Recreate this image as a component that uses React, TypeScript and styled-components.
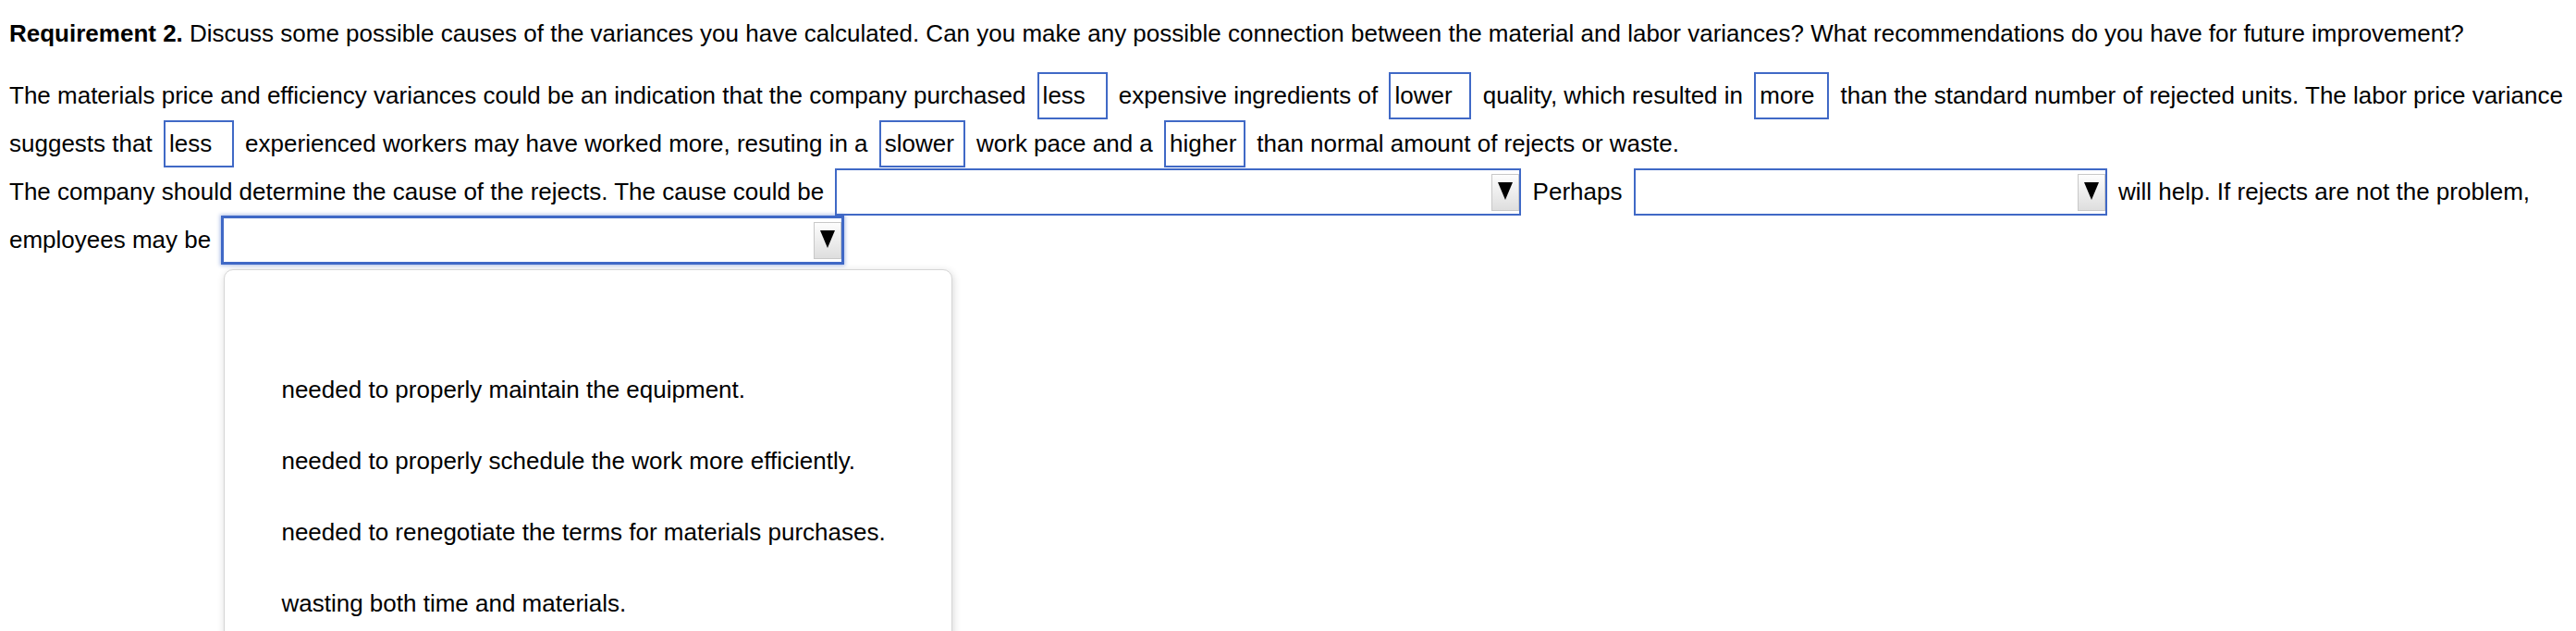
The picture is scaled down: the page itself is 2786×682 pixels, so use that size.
import React from "react";
import styled, { createGlobalStyle } from "styled-components";

const GlobalStyle = createGlobalStyle`
  html {
    overflow: hidden;
  }
  html, body {
    margin: 0;
    padding: 0;
    background: #ffffff;
  }
  body {
    font-family: "Liberation Sans", Arial, sans-serif;
    font-size: 26px;
    color: #000000;
  }
`;

const Page = styled.div`
  box-sizing: border-box;
  height: 682px;
  overflow: hidden;
  padding: 22px 8px 0 10px;
`;

const Title = styled.div`
  line-height: 28px;
  margin-bottom: 27px;
`;

const Strong = styled.b`
  font-weight: 700;
`;

const Paragraph = styled.div`
  line-height: 28px;
`;

const AnswerBox = styled.span<{ $w: number }>`
  display: inline-block;
  box-sizing: border-box;
  width: ${(p) => p.$w}px;
  height: 51px;
  margin: 1px 5px 0;
  padding: 0 4px;
  border: 2px solid #4069c6;
  line-height: 47px;
  vertical-align: baseline;
  white-space: nowrap;
`;

const SelectWrap = styled.span`
  position: relative;
  display: inline-block;
  margin: 1px 5px 0;
  vertical-align: baseline;
`;

const SelectBox = styled.span<{ $w: number; $focused?: boolean }>`
  display: inline-flex;
  align-items: center;
  box-sizing: border-box;
  width: ${(p) => p.$w}px;
  height: 51px;
  border: 2px solid #4069c6;
  background: #ffffff;
  box-shadow: ${(p) =>
    p.$focused
      ? "0 0 0 1px #3d66c6, 0 0 4px 2px rgba(64, 105, 198, 0.45)"
      : "none"};
  vertical-align: baseline;
`;

const SelectValue = styled.span`
  flex: 1;
  line-height: 47px;
  padding-left: 4px;
`;

const ArrowButton = styled.span`
  display: flex;
  align-items: center;
  justify-content: center;
  box-sizing: border-box;
  width: 30px;
  height: 40px;
  padding-bottom: 2px;
  border: 1px solid #c8c8c8;
  background: linear-gradient(#fdfdfd, #dedede);
`;

const Popup = styled.div`
  position: absolute;
  top: calc(100% + 6px);
  left: 2px;
  box-sizing: border-box;
  width: 788px;
  padding: 14px 0 20px;
  border: 1px solid #d6d6d6;
  border-radius: 10px;
  background: #ffffff;
  box-shadow: 1px 2px 9px rgba(0, 0, 0, 0.16);
  z-index: 10;
`;

const Option = styled.div`
  height: 77px;
  line-height: 77px;
  padding-left: 61px;
  white-space: nowrap;
`;

const Arrow = () => (
  <svg width="16" height="19" viewBox="0 0 16 19">
    <polygon points="0,0 16,0 8,19" fill="#000" />
  </svg>
);

const Select: React.FC<{ w: number; focused?: boolean; options?: string[] }> = ({
  w,
  focused,
  options,
}) => (
  <SelectWrap>
    <SelectBox $w={w} $focused={focused}>
      <SelectValue>{"\u00a0"}</SelectValue>
      <ArrowButton>
        <Arrow />
      </ArrowButton>
    </SelectBox>
    {options && (
      <Popup>
        {options.map((o, i) => (
          <Option key={i}>{o || "\u00a0"}</Option>
        ))}
      </Popup>
    )}
  </SelectWrap>
);

const choices = [
  "",
  "needed to properly maintain the equipment.",
  "needed to properly schedule the work more efficiently.",
  "needed to renegotiate the terms for materials purchases.",
  "wasting both time and materials.",
];

export default function App() {
  return (
    <>
      <GlobalStyle />
      <Page>
        <Title>
          <Strong>Requirement 2.</Strong> Discuss some possible causes of the variances you have
          calculated. Can you make any possible connection between the material and labor
          variances? What recommendations do you have for future improvement?
        </Title>
        <Paragraph>
          The materials price and efficiency variances could be an indication that the company
          purchased <AnswerBox $w={76}>less</AnswerBox> expensive ingredients of{" "}
          <AnswerBox $w={89}>lower</AnswerBox> quality, which resulted in{" "}
          <AnswerBox $w={81}>more</AnswerBox>
          {" than the standard number of rejected units. The labor price variance"}
          {" "}
          {"suggests that "}
          <AnswerBox $w={76}>less</AnswerBox> experienced workers may have worked more, resuting in
          a <AnswerBox $w={93}>slower</AnswerBox> work pace and a{" "}
          <AnswerBox $w={88}>higher</AnswerBox> than normal amount of rejects or waste.
        </Paragraph>
        <Paragraph>
          The company should determine the cause of the rejects. The cause could be{" "}
          <Select w={742} /> Perhaps <Select w={512} />
          {" will help. If rejects are not the problem,"}
          {" "}
          {"employees may be "}
          <Select w={672} focused options={choices} />
        </Paragraph>
      </Page>
    </>
  );
}
